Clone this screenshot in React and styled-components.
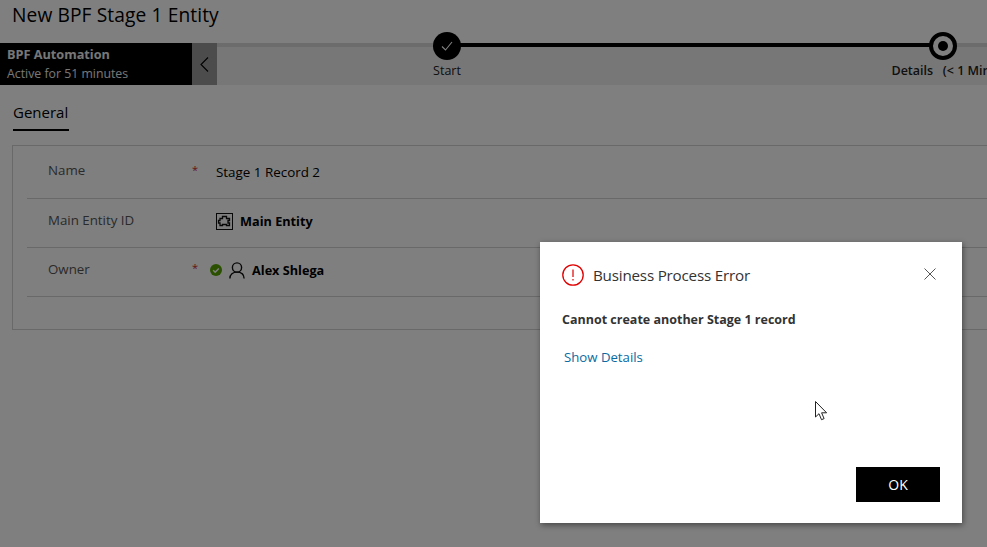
import React from "react";
import styled, { createGlobalStyle } from "styled-components";

const GlobalStyle = createGlobalStyle`
  html, body {
    margin: 0;
    height: 100%;
    overflow: hidden;
    background: #fff;
  }
  body {
    font-family: "Open Sans", "Noto Sans", "Liberation Sans", sans-serif;
    color: #000;
  }
`;

const Page = styled.div`
  position: relative;
  width: 987px;
  height: 547px;
  overflow: hidden;
  background: #fff;
`;

const Title = styled.h1`
  margin: 0;
  height: 43px;
  padding: 2px 0 0 12px;
  box-sizing: border-box;
  font-size: 19.2px;
  line-height: 26px;
  font-weight: 400;
  letter-spacing: 0.1px;
`;

const ProcessBar = styled.div`
  display: flex;
  height: 42px;
  background: #eeeeee;
`;

const ActiveFlag = styled.div`
  width: 192px;
  padding-left: 7px;
  box-sizing: border-box;
  background: #000;
  color: #fff;
  flex-shrink: 0;
`;

const FlagName = styled.div`
  font-size: 12.7px;
  line-height: 18px;
  font-weight: 700;
  margin-top: 2px;
  color: #eee;
`;

const FlagTime = styled.div`
  font-size: 12.3px;
  line-height: 19px;
  margin-top: 1px;
  color: #eee;
`;

const Collapse = styled.div`
  width: 25px;
  flex-shrink: 0;
  background: #999;
  display: flex;
  align-items: center;
  justify-content: center;
`;

const Stages = styled.div`
  display: grid;
  grid-template-columns: 460px 532px;
  flex: 1;
  position: relative;
  min-width: 0;
  &::before {
    content: "";
    position: absolute;
    left: 0;
    right: 0;
    top: 0;
    height: 4px;
    background: #d8d8d8;
  }
`;

const Stage = styled.div`
  position: relative;
  display: flex;
  flex-direction: column;
  align-items: center;
  height: 60px;
  margin-top: -11px;
`;

const Connector = styled.div`
  position: absolute;
  left: 50%;
  top: 11px;
  width: 496px;
  height: 4px;
  background: #000;
`;

const StageDot = styled.div`
  position: relative;
  width: 28px;
  height: 28px;
  box-sizing: border-box;
  border-radius: 50%;
  background: ${(p) => (p.$current ? "#fff" : "#000")};
  border: ${(p) => (p.$current ? "4px solid #000" : "none")};
  display: flex;
  align-items: center;
  justify-content: center;
`;

const CurrentPip = styled.div`
  width: 10px;
  height: 10px;
  border-radius: 50%;
  background: #000;
`;

const StageLabel = styled.div`
  margin-top: 2px;
  font-size: 12.5px;
  line-height: 17px;
  white-space: nowrap;
  font-weight: ${(p) => (p.$current ? 600 : 400)};
  color: #222;
`;

const Tabs = styled.div`
  display: flex;
  padding: 16px 0 0 13px;
  height: 60px;
  box-sizing: border-box;
`;

const Tab = styled.div`
  height: 28px;
  border-bottom: 2px solid #000;
  font-size: 15px;
  line-height: 22px;
  font-weight: 500;
  color: #000;
  width: 56px;
  white-space: nowrap;
`;

const Section = styled.section`
  margin-left: 12px;
  width: 1000px;
  height: 185px;
  box-sizing: border-box;
  border: 1px solid #d2d2d2;
  padding-left: 14px;
`;

const Row = styled.div`
  display: flex;
  height: 49px;
  box-sizing: border-box;
  border-bottom: 1px solid #d2d2d2;
  margin-top: ${(p) => (p.$first ? "4px" : "0")};
`;

const FieldLabel = styled.div`
  width: 165px;
  padding: ${(p) => (p.$first ? 11 : 12)}px 0 0 21px;
  box-sizing: border-box;
  font-size: 13.3px;
  line-height: 18px;
  color: #555;
`;

const Required = styled.div`
  width: 24px;
  padding-top: 12px;
  font-size: 11px;
  line-height: 16px;
  color: #c8281e;
`;

const Value = styled.div`
  display: flex;
  align-items: center;
  gap: ${(p) => p.$gap || 0}px;
  margin-left: ${(p) => p.$shift || 0}px;
  height: 44px;
  font-size: ${(p) => (p.$bold ? 12.7 : 13.4)}px;
  font-weight: ${(p) => (p.$bold ? 700 : 400)};
  color: #000;
`;

const Overlay = styled.div`
  position: absolute;
  inset: 0;
  background: rgba(0, 0, 0, 0.5);
`;

const Dialog = styled.div`
  position: absolute;
  left: 540px;
  top: 242px;
  width: 422px;
  height: 281px;
  box-sizing: border-box;
  padding: 21px 22px 21px 22px;
  display: flex;
  flex-direction: column;
  background: #fff;
  box-shadow: 1px 2px 6px rgba(0, 0, 0, 0.45);
`;

const DialogHead = styled.div`
  display: flex;
  align-items: center;
  gap: 9px;
  height: 24px;
`;

const DialogTitle = styled.div`
  flex: 1;
  font-size: 15.2px;
  line-height: 24px;
  color: #333;
  letter-spacing: -0.2px;
`;

const CloseBtn = styled.div`
  display: flex;
  margin: -2px 4px 0 0;
`;

const Message = styled.div`
  margin-top: 23px;
  font-size: 12.5px;
  line-height: 20px;
  font-weight: 700;
  color: #333;
`;

const Details = styled.a`
  margin: 17px 0 0 2px;
  font-size: 13.2px;
  line-height: 20px;
  color: #0a6aa1;
`;

const Footer = styled.div`
  margin-top: auto;
  display: flex;
  justify-content: flex-end;
`;

const OkButton = styled.button`
  width: 84px;
  height: 35px;
  border: none;
  background: #000;
  color: #fff;
  font-family: inherit;
  font-size: 14px;
`;

const Pointer = styled.svg`
  position: absolute;
  left: 815px;
  top: 401px;
`;

const EntityIcon = () => (
  <svg width="17" height="17" viewBox="0 0 17 17" fill="none" stroke="#111">
    <rect x="0.5" y="0.5" width="16" height="16" strokeWidth="1" />
    <path
      d="M4 5.500H6.500V3.500H10.500V5.500H13.500V7.500H12V10H13.500V12.500H10.500V11.500H6.500V12.500H4V10H2.500V7.500H4Z"
      strokeWidth="1.300"
    />
  </svg>
);

const PresenceIcon = () => (
  <svg width="12" height="12" viewBox="0 0 12 12">
    <circle cx="6" cy="6" r="6" fill="#57a300" />
    <path d="M3.200 6.200l2 2 3.600-3.800" fill="none" stroke="#fff" strokeWidth="1.500" />
  </svg>
);

const PersonIcon = () => (
  <svg width="16" height="17" viewBox="0 0 16 17" fill="none" stroke="#111" strokeWidth="1.400">
    <circle cx="8" cy="5.500" r="4.600" />
    <path d="M.9 16.500c0-4.200 3-6.400 7.100-6.400s7.100 2.200 7.100 6.400" />
  </svg>
);

export default function App() {
  return (
    <Page>
      <GlobalStyle />
      <Title>New BPF Stage 1 Entity</Title>
      <ProcessBar>
        <ActiveFlag>
          <FlagName>BPF Automation</FlagName>
          <FlagTime>Active for 51 minutes</FlagTime>
        </ActiveFlag>
        <Collapse>
          <svg width="9" height="15" viewBox="0 0 9 15" fill="none" stroke="#000" strokeWidth="1.100">
            <path d="M8 .5L1 7.500l7 7" />
          </svg>
        </Collapse>
        <Stages>
          <Stage>
            <Connector />
            <StageDot>
              <svg width="12" height="10" viewBox="0 0 12 10" fill="none" stroke="#fff" strokeWidth="1.100">
                <path d="M1 5.500l3.500 3.500L11 1" />
              </svg>
            </StageDot>
            <StageLabel>Start</StageLabel>
          </Stage>
          <Stage>
            <StageDot $current>
              <CurrentPip />
            </StageDot>
            <StageLabel $current>Details&nbsp;&nbsp; (&lt; 1 Min)</StageLabel>
          </Stage>
        </Stages>
      </ProcessBar>
      <Tabs>
        <Tab>General</Tab>
      </Tabs>
      <Section>
        <Row $first>
          <FieldLabel $first>Name</FieldLabel>
          <Required>*</Required>
          <Value>Stage 1 Record 2</Value>
        </Row>
        <Row>
          <FieldLabel>Main Entity ID</FieldLabel>
          <Required />
          <Value $bold $gap={7}>
            <EntityIcon />
            Main Entity
          </Value>
        </Row>
        <Row>
          <FieldLabel>Owner</FieldLabel>
          <Required>*</Required>
          <Value $bold $gap={7} $shift={-6}>
            <PresenceIcon />
            <PersonIcon />
            Alex Shlega
          </Value>
        </Row>
      </Section>
      <Overlay />
      <Dialog>
        <DialogHead>
          <svg width="22" height="22" viewBox="0 0 22 22" fill="none">
            <circle cx="11" cy="11" r="10.200" stroke="#e00000" strokeWidth="1.300" />
            <path d="M11 5.500v7.500M11 15v1.500" stroke="#e00000" strokeWidth="1.200" />
          </svg>
          <DialogTitle>Business Process Error</DialogTitle>
          <CloseBtn>
            <svg width="12" height="12" viewBox="0 0 12 12" fill="none" stroke="#555" strokeWidth="1">
              <path d="M.5.5l11 11M11.500.5l-11 11" />
            </svg>
          </CloseBtn>
        </DialogHead>
        <Message>Cannot create another Stage 1 record</Message>
        <Details>Show Details</Details>
        <Footer>
          <OkButton>OK</OkButton>
        </Footer>
      </Dialog>
      <Pointer width="13" height="20" viewBox="0 0 13 20">
        <path
          d="M.5.500v15.500l3.500-3.300 2.500 6 2.600-1.100-2.500-5.800h5z"
          fill="#fff"
          stroke="#222"
          strokeWidth="1"
        />
      </Pointer>
    </Page>
  );
}
